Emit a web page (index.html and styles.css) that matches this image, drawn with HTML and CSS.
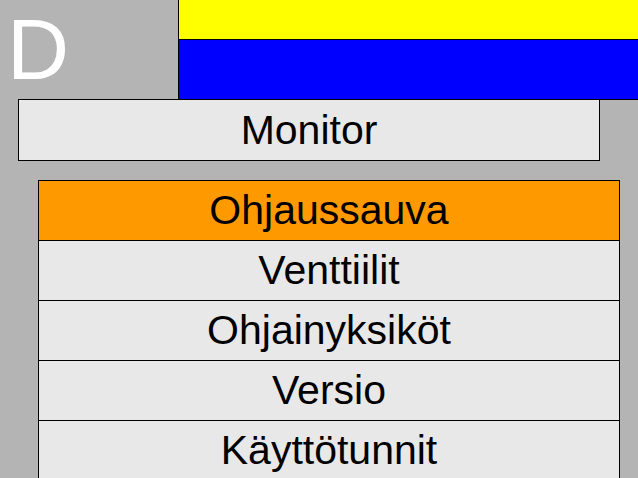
FILE: index.html
```html
<!DOCTYPE html>
<html lang="fi">
<head>
  <meta charset="UTF-8" />
  <title>Monitor</title>
  <link rel="stylesheet" href="styles.css">
</head>
<body>

  <div class="header">
    <div class="mode">D</div>
    <div class="flag">
      <div class="flag-top"></div>
      <div class="flag-bottom"></div>
    </div>
  </div>

  <div class="title">Monitor</div>

  <ul class="menu">
    <li class="active">Ohjaussauva</li>
    <li>Venttiilit</li>
    <li>Ohjainyksiköt</li>
    <li>Versio</li>
    <li>Käyttötunnit</li>
  </ul>

</body>
</html>
```

FILE: styles.css
```css
html, body {
  margin: 0;
  height: 100%;
  overflow: hidden;
}

body {
  font-family: "Liberation Sans", Arial, sans-serif;
  background-color: #b4b4b4;
  color: #000;
}

.header {
  display: flex;
  height: 100px;
}

.mode {
  width: 171px;
  padding: 6px 0 0 7px;
  font-size: 86px;
  line-height: 86px;
  color: #fff;
}

.flag {
  flex: 1;
  display: flex;
  flex-direction: column;
  border-left: 1px solid #000;
  border-bottom: 1px solid #000;
}

.flag-top {
  height: 39px;
  background-color: #ffff00;
  border-bottom: 1px solid #000;
}

.flag-bottom {
  flex: 1;
  background-color: #0000ff;
}

.title {
  margin: -1px 0 0 18px;
  width: 580px;
  height: 60px;
  line-height: 60px;
  border: 1px solid #000;
  background-color: #e8e8e8;
  font-size: 41px;
  text-align: center;
}

.menu {
  list-style: none;
  margin: 19px 0 0 38px;
  padding: 0;
  width: 580px;
  border-left: 1px solid #000;
  border-right: 1px solid #000;
}

.menu li {
  height: 59px;
  line-height: 59px;
  border-top: 1px solid #000;
  background-color: #e8e8e8;
  font-size: 41px;
  text-align: center;
}

.menu li.active {
  background-color: #ff9900;
}
```
